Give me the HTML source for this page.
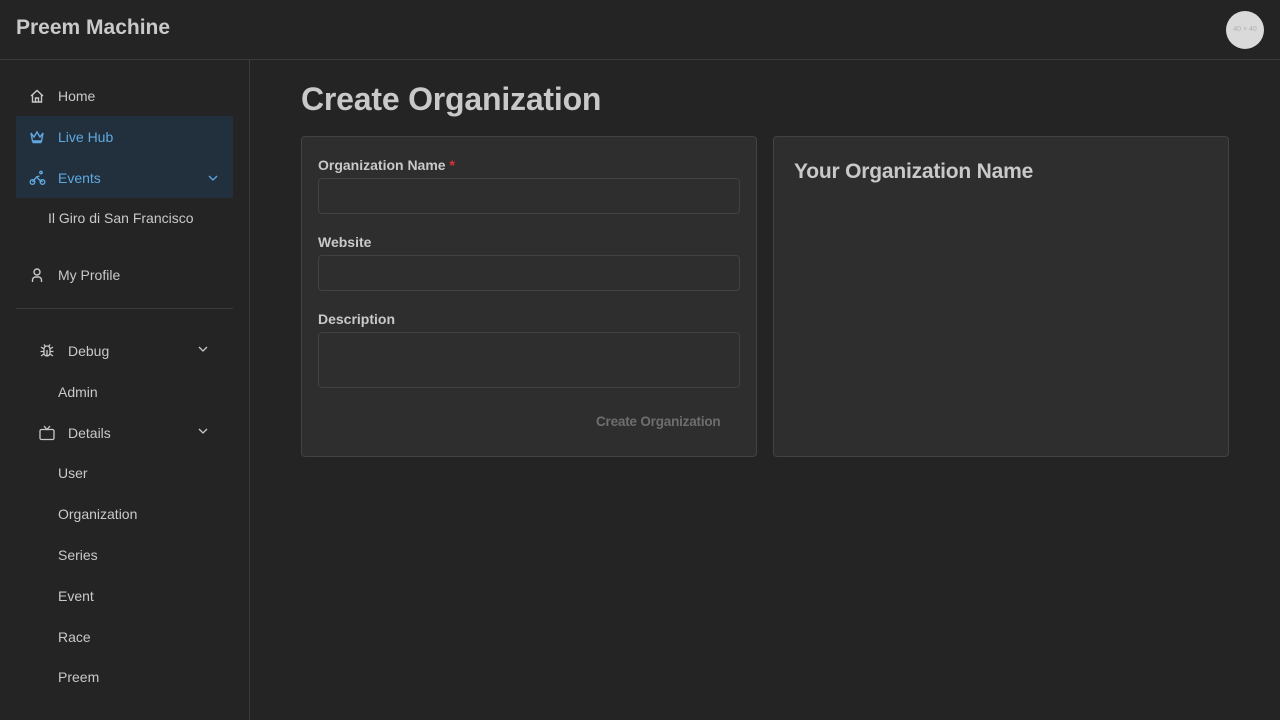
<!DOCTYPE html>
<html><head><style>
*{box-sizing:border-box;margin:0;padding:0}
body{width:1280px;height:720px;background:#242424;font-family:"Liberation Sans",Roboto,sans-serif;color:#c9c9c9;position:relative;overflow:hidden}
.hdr{position:absolute;left:0;top:0;width:1280px;height:60px;border-bottom:1px solid #3a3a3a}
.hdr h1{position:absolute;left:16px;top:16px;font-size:21px;font-weight:bold;color:#c9c9c9}
.av{position:absolute;left:1226px;top:11px;width:38px;height:38px;border-radius:50%;background:#dadada;color:#b0b0b0;font-size:7px;text-align:center;line-height:38px}
.side{position:absolute;left:0;top:60px;width:250px;height:660px;border-right:1px solid #3a3a3a}
.it{position:absolute;left:16px;width:217px;height:41px;font-size:14px;line-height:43px;color:#c9c9c9}
.it svg{position:absolute;left:13px;top:13px}
.it span{position:absolute;left:42px}
.act{background:#22303e;color:#5fa8e0}
.chev{position:absolute;right:14px;top:15px}
.sub{position:absolute;font-size:14px;color:#c9c9c9}
.hr{position:absolute;left:16px;top:248px;width:217px;height:1px;background:#3a3a3a}
.title{position:absolute;left:301px;top:81px;font-size:32px;font-weight:bold;color:#c9c9c9;letter-spacing:-0.2px}
.card{position:absolute;top:136px;height:321px;width:456px;background:#2e2e2e;border:1px solid #424242;border-radius:4px}
.lbl{position:absolute;left:16px;font-size:14px;font-weight:bold;color:#c9c9c9}
.inp{position:absolute;left:16px;width:422px;border:1px solid #424242;border-radius:4px;background:#2e2e2e}
</style></head><body>
<div class="hdr"><h1>Preem Machine</h1><div class="av">40 × 40</div></div>
<div class="side">
 <div class="it" style="top:15px"><svg width="16" height="16" viewBox="0 0 16 16" fill="none" stroke="#c9c9c9" stroke-width="1.4"><path d="M2 8L8 2.5 14 8M3.5 6.8V14h9V6.8M6.5 14V10h3v4"/></svg><span>Home</span></div>
 <div class="it act" style="top:56px"><svg width="16" height="16" viewBox="0 0 16 16" fill="none" stroke="#5fa8e0" stroke-width="1.4"><path d="M2 4l3 4 3-5 3 5 3-4-1.5 8h-9zM3.5 13.5h9"/></svg><span>Live Hub</span></div>
 <div class="it act" style="top:97px"><svg width="18" height="16" viewBox="0 0 18 16" fill="none" stroke="#5fa8e0" stroke-width="1.4"><circle cx="3.5" cy="12" r="2.3"/><circle cx="13.5" cy="12" r="2.3"/><circle cx="12" cy="2.5" r="1.2"/><path d="M3.5 12l4-5 3 3 3 2M7.5 7l3-1"/></svg><span>Events</span><svg class="chev" width="12" height="12" viewBox="0 0 12 12" fill="none" stroke="#5fa8e0" stroke-width="1.3" style="top:15px;left:auto"><path d="M2 4l4 4 4-4"/></svg></div>
 <div class="sub" style="left:48px;top:150px">Il Giro di San Francisco</div>
 <div class="it" style="top:194px"><svg width="16" height="16" viewBox="0 0 16 16" fill="none" stroke="#c9c9c9" stroke-width="1.4"><circle cx="8" cy="5" r="3"/><path d="M3.5 15v-2a3 3 0 013-3h3a3 3 0 013 3v2"/></svg><span>My Profile</span></div>
 <div class="hr"></div>
 <div class="it" style="top:270px;left:26px;width:197px"><svg width="16" height="16" viewBox="0 0 16 16" fill="none" stroke="#c9c9c9" stroke-width="1.3"><path d="M5 6a3 3 0 016 0v4a3 3 0 01-6 0zM8 7v6M1.5 8.5h3.5M11 8.5h3.5M2 4l3 2M14 4l-3 2M2 13l3-2M14 13l-3-2M6 3L5 1.5M10 3l1-1.5"/></svg><span>Debug</span><svg class="chev" width="12" height="12" viewBox="0 0 12 12" fill="none" stroke="#c9c9c9" stroke-width="1.3" style="left:auto"><path d="M2 4l4 4 4-4"/></svg></div>
 <div class="sub" style="left:58px;top:324px">Admin</div>
 <div class="it" style="top:352px;left:26px;width:197px"><svg width="16" height="16" viewBox="0 0 16 16" fill="none" stroke="#c9c9c9" stroke-width="1.3"><rect x="1" y="4.5" width="14" height="10" rx="1.5"/><path d="M5 1l3 3.5L11 1"/></svg><span>Details</span><svg class="chev" width="12" height="12" viewBox="0 0 12 12" fill="none" stroke="#c9c9c9" stroke-width="1.3" style="left:auto"><path d="M2 4l4 4 4-4"/></svg></div>
 <div class="sub" style="left:58px;top:405px">User</div>
 <div class="sub" style="left:58px;top:446px">Organization</div>
 <div class="sub" style="left:58px;top:487px">Series</div>
 <div class="sub" style="left:58px;top:528px">Event</div>
 <div class="sub" style="left:58px;top:569px">Race</div>
 <div class="sub" style="left:58px;top:609px">Preem</div>
</div>
<div class="title">Create Organization</div>
<div class="card" style="left:301px">
 <div class="lbl" style="top:20px">Organization Name <span style="color:#e03131">*</span></div>
 <div class="inp" style="top:41px;height:36px"></div>
 <div class="lbl" style="top:97px">Website</div>
 <div class="inp" style="top:118px;height:36px"></div>
 <div class="lbl" style="top:174px">Description</div>
 <div class="inp" style="top:195px;height:56px"></div>
 <div style="position:absolute;left:294px;top:277px;font-size:13.5px;font-weight:bold;color:#6e6e6e;letter-spacing:-0.2px">Create Organization</div>
</div>
<div class="card" style="left:773px">
 <div style="position:absolute;left:20px;top:23px;font-size:21px;font-weight:bold;color:#c9c9c9;letter-spacing:-0.2px">Your Organization Name</div>
</div>
</body></html>
